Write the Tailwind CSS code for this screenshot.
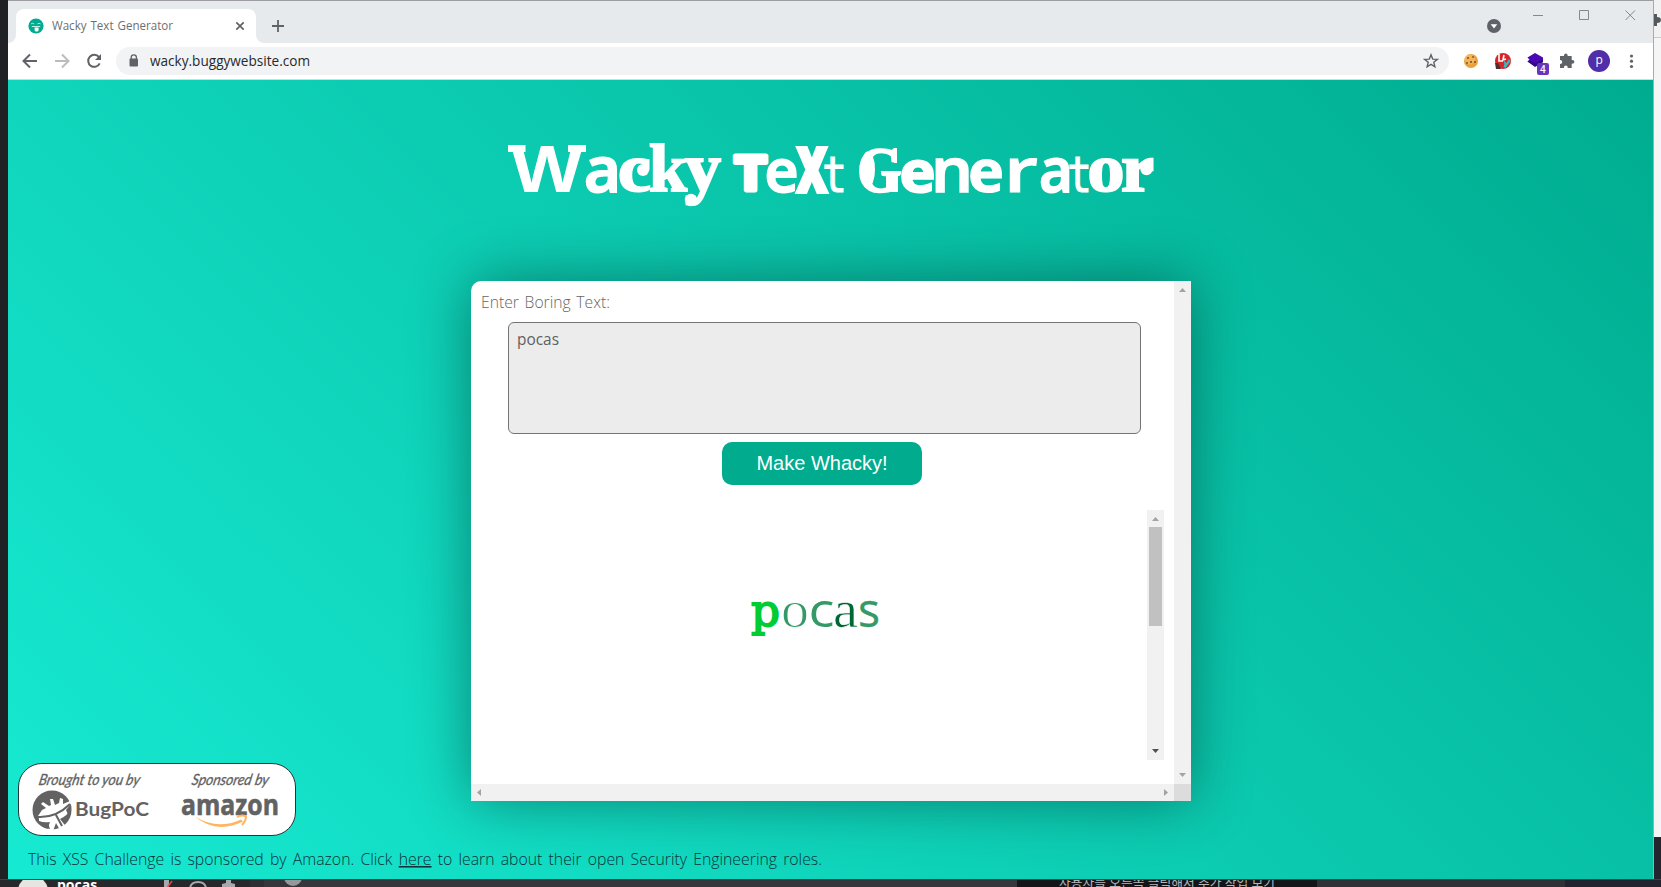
<!DOCTYPE html>
<html lang="en"><head><meta charset="utf-8"><title>Wacky Text Generator</title>
<script src="https://cdn.jsdelivr.net/npm/@tailwindcss/browser@4"></script></head>
<body class="w-[1661px] h-[887px] overflow-hidden bg-[#202125] font-['Open_Sans','Noto_Sans_CJK_KR',sans-serif]">
<div class="flex h-[879px]">
  <div class="w-2 shrink-0 bg-[#202125]"></div>
  <div class="w-[1645px] shrink-0 flex flex-col">
    <!-- tab strip -->
    <div class="h-[43px] bg-[#e6eaed] border-t border-[#9b9da3] flex items-end relative">
      <div class="w-2 h-2 bg-white"><div class="w-2 h-2 bg-[#e6eaed] rounded-br-lg"></div></div>
      <div class="w-[240px] h-[34px] bg-white rounded-t-lg flex items-center pl-3 pr-[10px]">
        <svg class="w-4 h-4 shrink-0" viewBox="0 0 16 16"><circle cx="8" cy="8" r="7.6" fill="#00ac8f"/><path d="M3 5.900q1.600-1.200 3.200 0M9.400 5.900q1.600-1.200 3.200 0" fill="none" stroke="#d8f5ef" stroke-width=".8"/><path d="M3.800 8h8.400v1H3.800z" fill="#c8efe7"/><path d="M6.600 9.500h4v2.500q0 1.600-2 1.600t-2-1.600z" fill="#fff"/></svg>
        <svg class="ml-2 h-5 w-[130px]" viewBox="0 0 130 20"><text x="0" y="14" font-size="12" fill="#6b6f73" word-spacing="1" textLength="121" lengthAdjust="spacingAndGlyphs">Wacky Text Generator</text></svg>
        <svg class="ml-auto w-3 h-3" viewBox="0 0 12 12"><path d="M2.300 2.300l7.400 7.400M9.700 2.300l-7.400 7.400" stroke="#5f6368" stroke-width="1.700"/></svg>
      </div>
      <div class="w-2 h-2 bg-white"><div class="w-2 h-2 bg-[#e6eaed] rounded-bl-lg"></div></div>
      <svg class="w-4 h-4 mb-[9px] ml-[6px]" viewBox="0 0 16 16"><path d="M8 2v12M2 8h12" stroke="#5f6368" stroke-width="1.800"/></svg>
      <svg class="ml-auto w-4 h-4 mb-[9px]" viewBox="0 0 16 16"><circle cx="8" cy="8" r="7" fill="#5f6368"/><path d="M4.700 6.300h6.600L8 10.500z" fill="#fff"/></svg>
      <svg class="w-[103px] h-3 ml-[31px] mr-[17px] mb-[22px]" viewBox="0 0 103 12"><path d="M0 6.500h10M46.500 1.500h9v9h-9zM92.500 1.500l9.500 9.500M102 1.500l-9.500 9.500" fill="none" stroke="#85898c"/></svg>
    </div>
    <!-- toolbar -->
    <div class="h-[37px] bg-white border-b border-[#d5d9d9] flex items-center pb-px">
      <svg class="w-[110px] h-8 shrink-0" viewBox="0 0 110 32"><g fill="none" stroke-width="2"><path d="M29 16H16M22 9.500L15.500 16l6.500 6.500" stroke="#5f6368"/><path d="M47 16h13M54 9.500l6.500 6.500-6.500 6.500" stroke="#babcbe"/><path d="M91 12.200A6 6 0 1 0 91.700 18.300" stroke="#5f6368"/></g><path d="M93 9v6h-6z" fill="#5f6368"/></svg>
      <div class="w-[1333px] shrink-0 ml-[-2px] h-7 rounded-full bg-[#f1f3f4] flex items-center">
        <svg class="ml-3 w-3 h-4 shrink-0" viewBox="0 0 12 16"><rect x="1.500" y="5.500" width="8.500" height="8" rx="1" fill="#5f6368"/><path d="M3.200 7V4.500a2.600 2.600 0 0 1 5.200 0v2" fill="none" stroke="#5f6368" stroke-width="1.300"/></svg>
        <svg class="ml-[10px] w-[170px] h-6" viewBox="0 0 170 24"><text x="0" y="17" font-size="14" fill="#27292c" textLength="160" lengthAdjust="spacingAndGlyphs">wacky.buggywebsite.com</text></svg>
        <svg class="ml-auto mr-[10px] w-4 h-4" viewBox="0 0 16 16"><path d="M8 1.800l1.700 4.300 4.600.3-3.500 2.900 1.100 4.500L8 11.400l-3.900 2.400 1.100-4.500-3.500-2.900 4.600-.3z" fill="none" stroke="#5f6368" stroke-width="1.400"/></svg>
      </div>
      <svg class="w-[204px] h-8 shrink-0" viewBox="3 0 204 32">
        <circle cx="25" cy="16" r="7" fill="#e8a13c"/><circle cx="24" cy="14.500" r="5" fill="#f1b65b"/><g fill="#8b4a1e"><circle cx="22" cy="13" r="1"/><circle cx="27" cy="12" r=".9"/><circle cx="25" cy="17" r="1.100"/><circle cx="29" cy="17" r="1"/><circle cx="21" cy="18" r=".9"/></g>
        <circle cx="57" cy="16" r="8" fill="#d5262b"/><path d="M49 18l1 6h5l-3-6z" fill="#4b3033"/><path d="M53 9v7h4M58 10l-1 5 3-1" fill="none" stroke="#fff" stroke-width="1.600"/><path d="M57 15l3.500 3 2.500-4 1.500 2-5 7-2-1 1-3z" fill="#26c2c9"/>
        <path d="M81.500 12.500L89 8l8 4.500v4L89 21l-7.500-4.500 2-1.800z" fill="#4b09b3"/><path d="M81.500 16.500l2-1.500 5.500 3.300 8-4v3L89 22z" fill="#35078c"/><rect x="91" y="18" width="12" height="12" rx="2" fill="#6837b9"/><text x="94" y="27.500" font-size="10" font-weight="600" fill="#fff">4</text>
        <path d="M114 11h4c-.4-3.500 4-3.500 3.700 0h4v4c3.600-.4 3.600 4 0 3.700V23h-4c.2-3.200-4-3.200-3.700 0h-4v-4c3 .1 3-4.100 0-4z" fill="#5f6368"/>
        <circle cx="153" cy="16" r="11" fill="#512da8"/><text x="149.500" y="19" font-size="12" fill="#fff">p</text>
        <g fill="#5f6368"><circle cx="185.500" cy="11" r="1.600"/><circle cx="185.500" cy="16.200" r="1.600"/><circle cx="185.500" cy="21.500" r="1.600"/></g>
      </svg>
    </div>
    <!-- page -->
    <div class="h-[799px] bg-[linear-gradient(45deg,#17ead2,#00ac8f)] flex flex-col relative">
      <svg class="w-[680px] h-[110px] ml-[470px] mt-[40px] shrink-0" viewBox="478 120 680 110" fill="#fff">
        <text x="511" y="191.500" font-family="Liberation Sans" font-weight="bold" font-size="67" textLength="72" lengthAdjust="spacingAndGlyphs">W</text>
        <path d="M508 145h17.500v7H508zM568 145h18v7h-18z"/>
        <text x="584" y="191.500" font-weight="600" font-size="63" stroke="#fff" stroke-width="2" textLength="37" lengthAdjust="spacingAndGlyphs">a</text>
        <g font-family="Liberation Serif" font-weight="bold" font-size="68" stroke="#fff" stroke-width="2">
        <text x="618" y="191" textLength="33" lengthAdjust="spacingAndGlyphs">c</text>
        <text x="649" y="191" textLength="38" lengthAdjust="spacingAndGlyphs">k</text>
        <text x="685" y="191" textLength="36" lengthAdjust="spacingAndGlyphs">y</text>
        <text x="1087.500" y="191" textLength="37" lengthAdjust="spacingAndGlyphs">o</text>
        <text x="1121" y="191" textLength="33" lengthAdjust="spacingAndGlyphs">r</text></g>
        <!-- ball terminals -->
        <circle cx="643" cy="170" r="6"/><circle cx="691" cy="200" r="6.200"/><circle cx="1146.500" cy="169" r="6.200"/>
        <text x="857" y="191.500" font-family="Liberation Serif" font-weight="bold" font-size="66" stroke="#fff" stroke-width="1.500" textLength="44" lengthAdjust="spacingAndGlyphs">G</text>
        <ellipse cx="868" cy="169.500" rx="7" ry="18"/><path d="M894 148h3v15h-3q-1-7-6-10zM881 171h20v3.500h-3V192h-12v-17.500h-5z"/>
        <text x="735" y="190" font-family="DejaVu Sans" font-weight="bold" font-size="46" stroke="#fff" stroke-width="5" stroke-linejoin="round" textLength="31" lengthAdjust="spacingAndGlyphs">T</text>
        <text x="764.500" y="191.500" font-weight="600" font-size="60" stroke="#fff" stroke-width="1.800" textLength="34" lengthAdjust="spacingAndGlyphs">e</text>
        <text x="797" y="191.500" font-weight="800" font-size="62" stroke="#fff" stroke-width="4" textLength="30" lengthAdjust="spacingAndGlyphs">X</text>
        <text x="822" y="191.500" font-family="DejaVu Sans Mono" font-size="50" stroke="#fff" stroke-width="1" textLength="25" lengthAdjust="spacingAndGlyphs">t</text>
        <text x="899.500" y="191.500" font-weight="bold" font-size="58" stroke="#fff" stroke-width="2" textLength="36" lengthAdjust="spacingAndGlyphs">e</text>
        <text x="931" y="191.500" font-weight="600" font-size="62" stroke="#fff" stroke-width="1.500" textLength="42" lengthAdjust="spacingAndGlyphs">n</text>
        <text x="968" y="191.500" font-weight="bold" font-size="59" stroke="#fff" textLength="36" lengthAdjust="spacingAndGlyphs">e</text>
        <text x="1004" y="191.500" font-weight="600" font-size="62" stroke="#fff" textLength="34" lengthAdjust="spacingAndGlyphs">r</text>
        <text x="1039" y="191.500" font-weight="600" font-size="61" stroke="#fff" stroke-width="1.800" textLength="34" lengthAdjust="spacingAndGlyphs">a</text>
        <text x="1067" y="191.500" font-family="DejaVu Sans Mono" font-size="50" stroke="#fff" stroke-width="1" textLength="25" lengthAdjust="spacingAndGlyphs">t</text>
      </svg>
      <!-- generator frame -->
      <div class="w-[720px] h-[520px] ml-[463px] mt-[51px] shrink-0 bg-white rounded-tl-[10px] shadow-[0_0_60px_rgba(0,0,0,0.4)] grid grid-cols-[703px_17px] grid-rows-[503px_17px]">
        <div class="flex flex-col">
          <svg class="w-[150px] h-[41px] ml-[10px] shrink-0" viewBox="0 0 150 41"><text x="0" y="27" font-size="15.500" font-weight="300" word-spacing="1.500" fill="#666" textLength="129" lengthAdjust="spacingAndGlyphs">Enter Boring Text:</text></svg>
          <div class="ml-[37px] w-[633px] h-[112px] border border-[#747474] rounded-md bg-[#ececec] pl-2 pt-1"><svg class="w-20 h-6" viewBox="0 0 80 24"><text x="0" y="18" font-size="15.500" fill="#606060" textLength="42" lengthAdjust="spacingAndGlyphs">pocas</text></svg></div>
          <div class="ml-[251px] mt-2 w-[200px] h-[43px] rounded-[10px] bg-[#00ab8e] text-white text-[20px] leading-[43px] text-center font-['Liberation_Sans',sans-serif]">Make Whacky!</div>
          <div class="mt-[25px] ml-5 w-[673px] h-[250px] flex">
            <svg class="w-[656px] h-[250px]" viewBox="491 510 656 250">
              <text x="751" y="626" font-family="DejaVu Serif" font-size="45" fill="#00cc33" stroke="#00cc33" stroke-width="1.800" textLength="29" lengthAdjust="spacingAndGlyphs">p</text>
              <text x="781" y="626.500" font-family="Liberation Serif" font-size="52" fill="#339966" stroke="#fff" stroke-width="1" textLength="28" lengthAdjust="spacingAndGlyphs">o</text>
              <text x="808.500" y="626.500" font-size="48" fill="#339966" textLength="26" lengthAdjust="spacingAndGlyphs">c</text>
              <text x="833" y="626.500" font-family="Liberation Serif" font-size="52" fill="#006633" stroke="#fff" stroke-width=".6" textLength="25" lengthAdjust="spacingAndGlyphs">a</text>
              <text x="858" y="626.500" font-size="48" fill="#339966" stroke="#339966" stroke-width=".3" textLength="22" lengthAdjust="spacingAndGlyphs">s</text>
            </svg>
            <div class="w-[17px] bg-[#f1f1f1] flex flex-col items-center">
              <svg class="w-[17px] h-[17px]" viewBox="0 0 17 17"><path d="M5 11h7L8.500 7z" fill="#a3a3a3"/></svg>
              <div class="w-[13px] h-[99px] bg-[#c1c1c1]"></div>
              <svg class="w-[17px] h-[17px] mt-auto" viewBox="0 0 17 17"><path d="M5 6h7l-3.500 4z" fill="#505050"/></svg>
            </div>
          </div>
        </div>
        <div class="bg-[#f1f1f1] flex flex-col justify-between">
          <svg class="w-[17px] h-[17px]" viewBox="0 0 17 17"><path d="M5 11h7L8.500 7z" fill="#a3a3a3"/></svg>
          <svg class="w-[17px] h-[17px]" viewBox="0 0 17 17"><path d="M5 6h7l-3.500 4z" fill="#a3a3a3"/></svg>
        </div>
        <div class="bg-[#f1f1f1] flex justify-between">
          <svg class="w-[17px] h-[17px]" viewBox="0 0 17 17"><path d="M10 5v7L6 8.500z" fill="#a3a3a3"/></svg>
          <svg class="w-[17px] h-[17px]" viewBox="0 0 17 17"><path d="M7 5v7l4-3.500z" fill="#a3a3a3"/></svg>
        </div>
        <div class="bg-[#dcdcdc]"></div>
      </div>
      <!-- sponsor badge -->
      <div class="absolute left-[10px] top-[683px] w-[278px] h-[73px] bg-white border border-[#25363a] rounded-[24px]">
        <svg class="w-[276px] h-[71px]" viewBox="19 764 276 71" fill="#626262">
          <g font-family="Lato" font-style="italic" font-size="15.500" stroke="#626262" stroke-width=".3">
          <text transform="translate(38 785) skewX(-12)" x="0" y="0" textLength="101" lengthAdjust="spacingAndGlyphs">Brought to you by</text>
          <text transform="translate(191 785) skewX(-12)" x="0" y="0" textLength="77" lengthAdjust="spacingAndGlyphs">Sponsored by</text></g>
          <!-- bug emblem -->
          <circle cx="52" cy="810" r="19.500"/>
          <path d="M38 816l4-6 4-2-5-4 2-2 6 4 2-1-1-6h3l2 6 4-2 1-5 3 1v5l7-3 1 3-4 3-5 8-6 4-8 1-9-1z" fill="#fff"/>
          <path d="M39 818q16 2 31-13l1 4q-4 7-11 10l8 10-7 3-5-9-3 8-6-1 3-8q-6 1-11-1z" fill="#fff"/>
          <path d="M38 817q18 1 32-13M56 815l6 11" fill="none" stroke="#626262" stroke-width="2"/>
          <path d="M38 821q6 3 10 2l2 6q-8-1-12-8zM71 804q1 7-2 13l-3-7z"/>
          <text x="75" y="816" font-family="Lato" font-weight="bold" font-size="19.500" textLength="74" lengthAdjust="spacingAndGlyphs">BugPoC</text>
          <text x="181" y="814.500" font-weight="bold" font-size="28" stroke="#626262" stroke-width=".6" textLength="98" lengthAdjust="spacingAndGlyphs">amazon</text>
          <path d="M195 816.500q22 14 46 3l2 2q-27 13-48-5z" fill="#ffb45f"/><path d="M237 817q5-2.500 9-.5 0 4-4 8.500" fill="none" stroke="#ffb45f" stroke-width="2"/>
        </svg>
      </div>
      <svg class="absolute left-[20px] top-[765px] w-[800px] h-[30px]" viewBox="28 845 800 30" font-size="15.500" font-weight="300" fill="#08343a"><text x="28" y="865" word-spacing="2" textLength="794" lengthAdjust="spacingAndGlyphs">This XSS Challenge is sponsored by Amazon. Click <tspan text-decoration="underline">here</tspan> to learn about their open Security Engineering roles.</text></svg>
    </div>
  </div>
  <!-- neighbouring window edge -->
  <div class="w-2 bg-[#f5f5f5] border-l border-[#a9aaab] flex flex-col">
    <div class="h-[38px] bg-[#f1f1f1] border-b border-[#cbcbcb] pt-[13px]"><svg class="w-[7px] h-[14px]" viewBox="0 0 7 14"><path d="M0 1h3v3q4 0 4 3t-4 3v3H0z" fill="#55595d"/></svg></div>
    <div class="mt-auto h-[42px] bg-[#23252f]"></div>
  </div>
</div>
<!-- windows behind -->
<div class="h-2 bg-[#35373d] flex overflow-hidden border-t border-[#36474a]">
  <div class="w-[250px] h-2 bg-[#27282c] flex pl-[18px] overflow-hidden">
    <div class="w-[30px] h-[30px] rounded-full bg-[#e7e5e1] shrink-0 -mt-1"></div>
    <div class="ml-[9px] -mt-[2px] text-white text-[14px] leading-[14px] font-bold">pocas</div>
    <svg class="ml-[64px] w-20 h-2" viewBox="0 0 80 8"><path d="M3 0h5v7H3z" fill="#a7a9ad"/><path d="M6 8l5-7" stroke="#ed4245" stroke-width="1.500"/><path d="M29 8q1-6 8-6t8 6" fill="none" stroke="#a7a9ad" stroke-width="2"/><path d="M61 8V4l4-1V0h5v3l4 1v4z" fill="#a7a9ad"/></svg>
  </div>
  <div class="w-[14px] h-2 bg-[#2d2f34]"></div>
  <div class="w-[753px] h-2 flex pl-[20px]"><div class="w-[18px] h-[18px] rounded-full bg-[#96989b] -mt-3"></div></div>
  <div class="w-[300px] h-2 bg-[#141519] pl-[42px] overflow-hidden"><svg class="w-[220px] h-2" viewBox="0 0 220 8"><text x="0" y="7" font-size="13" fill="#b5b6b8" textLength="216" lengthAdjust="spacingAndGlyphs">사용자를 오른쪽 클릭해서 추가 작업 보기</text></svg></div>
  <div class="w-[248px] h-2 bg-[#303136]"></div><div class="flex-1 h-2 bg-[#22232e]"></div>
</div>
</body></html>
